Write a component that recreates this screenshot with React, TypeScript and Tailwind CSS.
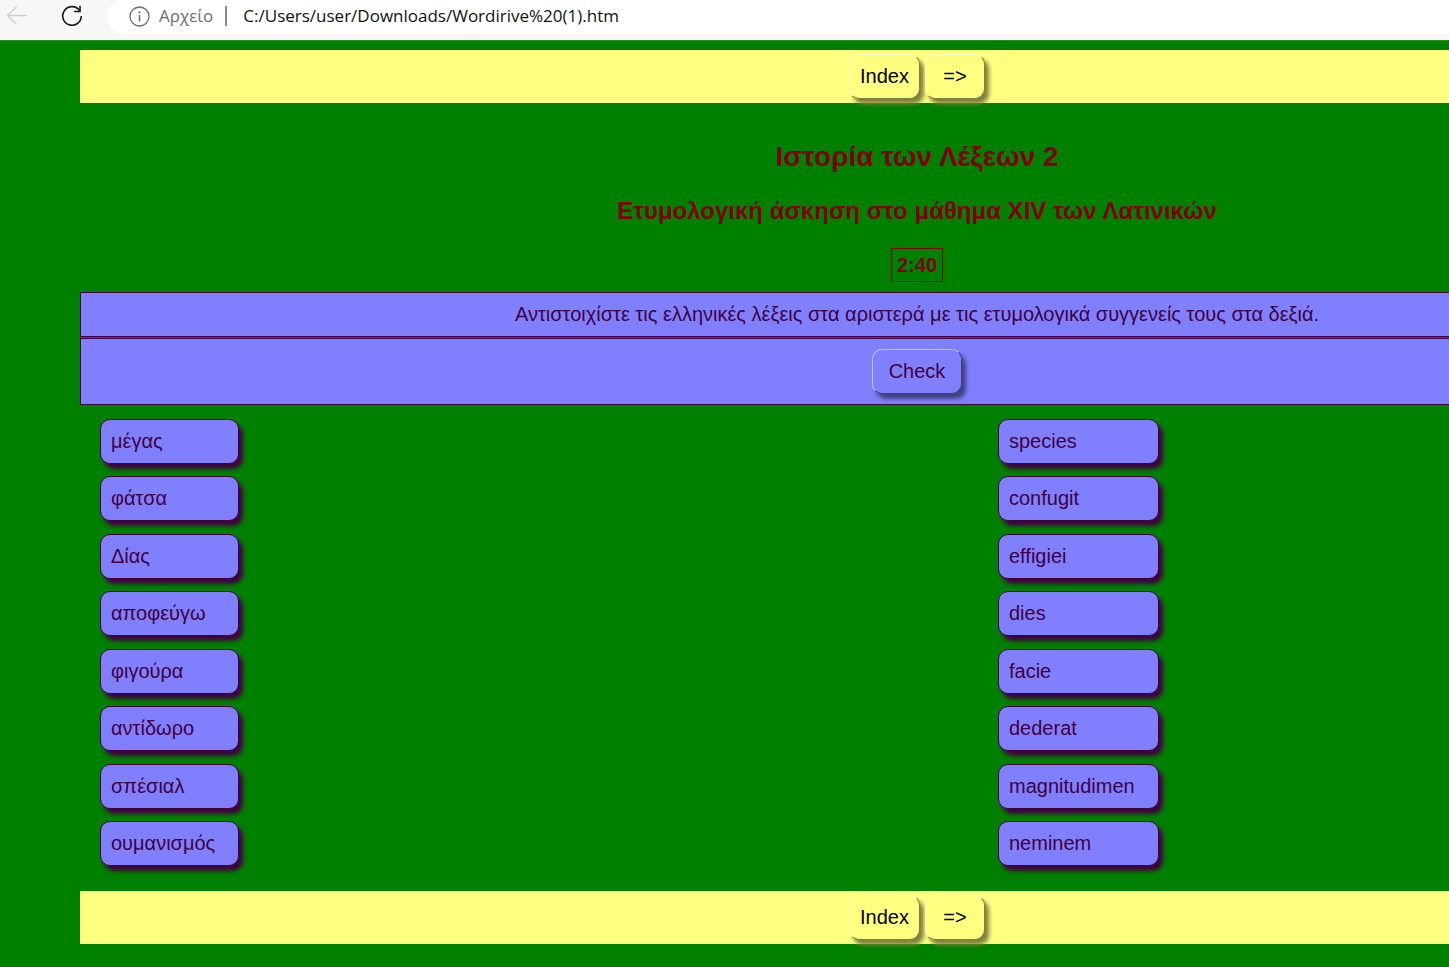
const greekWords = ["μέγας", "φάτσα", "Δίας", "αποφεύγω", "φιγούρα", "αντίδωρο", "σπέσιαλ", "ουμανισμός"];
const latinWords = ["species", "confugit", "effigiei", "dies", "facie", "dederat", "magnitudimen", "neminem"];

function BrowserBar() {
  return (
    <header className="flex h-[41px] items-start border-b border-[#2a8a2a] bg-[#f7f7f7] font-['Open_Sans','Noto_Sans',sans-serif]">
      <div className="flex h-8 w-[107px] shrink-0 items-center justify-between pr-6 pl-[6px]">
        <button type="button" aria-label="Back" className="text-[#cfcfcf]">
          <svg width="22" height="20" viewBox="0 0 22 20" fill="none" stroke="currentColor" strokeWidth="1.3">
            <path d="M21 9.5H1.5M10.5 .8 1.5 9.5l9 8.7" />
          </svg>
        </button>
        <button type="button" aria-label="Refresh" className="text-[#1a1a1a]">
          <svg width="22" height="22" viewBox="0 0 22 22" fill="none" stroke="currentColor" strokeWidth="1.6">
            <path d="M18.6 5.6A9.3 9.3 0 1 0 20.3 11" />
            <path d="M19 .8v5.7h-5.8" />
          </svg>
        </button>
      </div>
      <div className="flex h-[34px] min-w-0 flex-1 items-start rounded-l-full bg-white pl-[22px]">
        <div className="flex h-8 min-w-0 flex-1 items-center">
          <svg width="21" height="21" viewBox="0 0 21 21" fill="none" stroke="#6e6e6e" strokeWidth="1.3" className="shrink-0">
            <circle cx="10.5" cy="10.5" r="9.5" />
            <path d="M10.5 9v6.5" strokeWidth="1.6" />
            <circle cx="10.5" cy="6.3" r="1.1" fill="#6e6e6e" stroke="none" />
          </svg>
          <span className="ml-[9px] text-[17px] leading-6 text-[#6e6e6e]">Αρχείο</span>
          <span className="ml-3 h-5 w-[2px] shrink-0 bg-[#8a8a8a]" />
          <input
            aria-label="Address"
            readOnly
            value="C:/Users/user/Downloads/Wordirive%20(1).htm"
            className="ml-4 min-w-0 flex-1 bg-transparent text-[17px] leading-6 text-[#111] outline-none"
          />
        </div>
      </div>
    </header>
  );
}

const navButton =
  "h-[45px] rounded-[10px] border border-t-[#ffffbf] border-l-[#ffffbf] border-r-[#80803f] border-b-[#80803f] bg-[#ffff80] pb-[2px] text-black shadow-[4px_5px_4px_#80803f]";

function NavBar() {
  return (
    <nav className="flex h-[53px] items-center justify-center gap-[5px] bg-[#ffff80]">
      <button type="button" className={navButton + " w-[71px]"}>Index</button>
      <button type="button" className={navButton + " w-[60px]"}>=&gt;</button>
    </nav>
  );
}

function WordList({ words, width }: { words: string[]; width: string }) {
  return (
    <ul className={"flex h-[447px] flex-col justify-between " + width}>
      {words.map((word) => (
        <li
          key={word}
          className="flex h-[45px] items-center rounded-[10px] border border-[#400040] bg-[#8080ff] pb-px pl-[10px] shadow-[4px_5px_4px_#400040]"
        >
          {word}
        </li>
      ))}
    </ul>
  );
}

export default function App() {
  return (
    <div className="min-h-screen overflow-hidden bg-[#008000]">
      <BrowserBar />
      <div className="pt-[9px] pb-[23px] pl-20 font-['Liberation_Sans',Arial,sans-serif] text-[20px] leading-[22px] text-[#400040]">
        <div className="w-[calc(100%+305px)]">
          <NavBar />
          <main>
            <div className="flex flex-col items-center pt-[38px] pb-[10px] font-bold text-[#800000]">
              <h1 className="text-[28px] leading-8">Ιστορία των Λέξεων 2</h1>
              <h2 className="mt-6 text-[24px] leading-7">Ετυμολογική άσκηση στο μάθημα XIV των Λατινικών</h2>
              <div className="mt-[23px] border border-[#800000] px-[5px] py-[5px]">2:40</div>
            </div>
            <p className="mb-px border border-[#400040] bg-[#8080ff] pt-[10px] pb-[11px] text-center">
              Αντιστοιχίστε τις ελληνικές λέξεις στα αριστερά με τις ετυμολογικά συγγενείς τους στα δεξιά.
            </p>
            <div className="flex justify-center border border-[#400040] bg-[#8080ff] py-[10px]">
              <button
                type="button"
                className="h-[45px] w-[90px] rounded-[10px] border border-t-[#bfbfff] border-l-[#bfbfff] border-r-[#40407f] border-b-[#40407f] bg-[#8080ff] pb-[2px] shadow-[4px_5px_4px_#40407f]"
              >
                Check
              </button>
            </div>
            <div className="flex gap-[759px] pt-[14px] pb-[25px] pl-5">
              <WordList words={greekWords} width="w-[139px]" />
              <WordList words={latinWords} width="w-[161px]" />
            </div>
          </main>
          <NavBar />
        </div>
      </div>
    </div>
  );
}
